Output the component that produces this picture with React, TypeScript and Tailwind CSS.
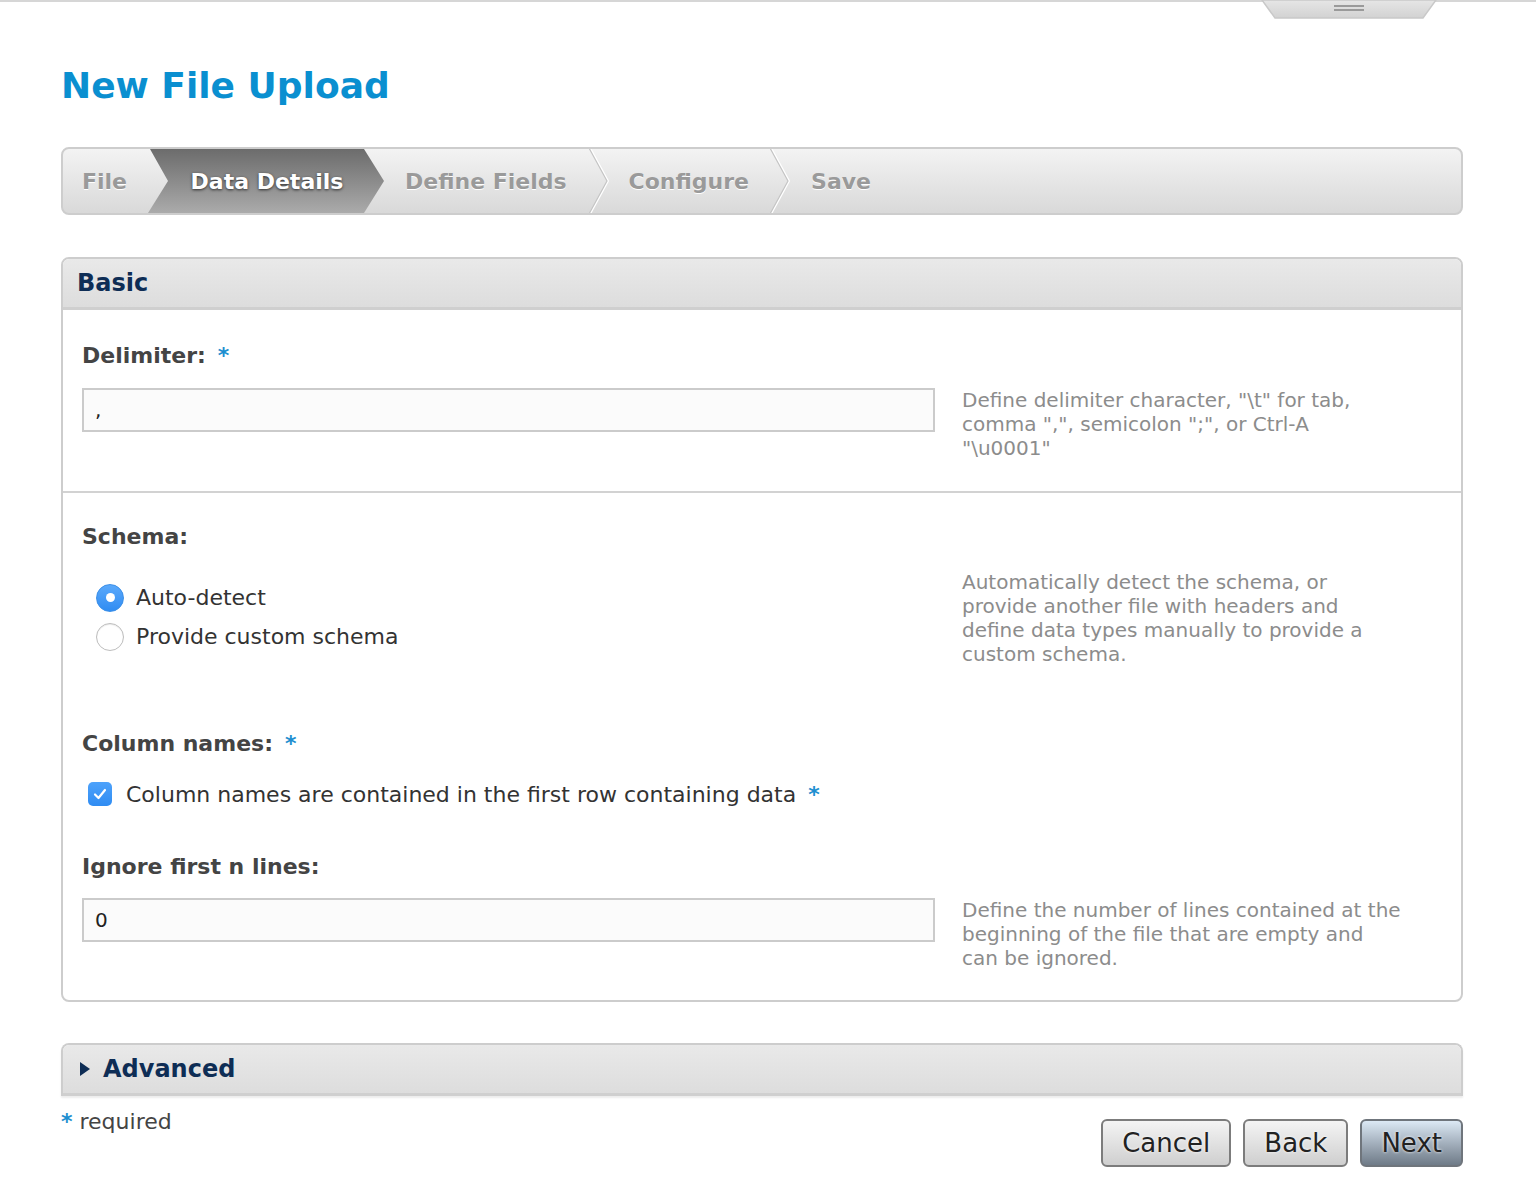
import React, { useState } from 'react';

const font = "font-['DejaVu_Sans',Verdana,sans-serif]";

function Star() {
  return <span className="text-[#1e8fd0] font-bold">*</span>;
}

function StepSeparator() {
  return (
    <svg width="22" height="66" viewBox="0 0 22 66" className="shrink-0">
      <polyline points="2,0 20,33 2,66" fill="none" stroke="#ffffff" strokeWidth="2" transform="translate(1,0)" />
      <polyline points="2,0 20,33 2,66" fill="none" stroke="#c4c4c4" strokeWidth="1.2" />
    </svg>
  );
}

function Wizard() {
  const dim = 'text-[22px] font-bold text-[#9a9a9a] [text-shadow:0_1px_0_#ffffff] whitespace-nowrap';
  return (
    <div className="h-[68px] border-2 border-[#cdcdcd] rounded-[8px] bg-linear-to-b from-[#f3f3f3] to-[#d9d9d9] flex items-stretch overflow-hidden">
      <div className={`${dim} flex items-center pl-[19px] w-[85px]`}>File</div>
      <div className="w-[236px] flex items-center justify-center bg-linear-to-b from-[#6c6c6c] to-[#ababab] [clip-path:polygon(2px_0,calc(100%_-_20px)_0,100%_50%,calc(100%_-_20px)_100%,0_100%,20px_50%)]">
        <span className="text-[22px] font-bold text-white [text-shadow:0_1px_3px_rgba(0,0,0,0.7)] whitespace-nowrap pl-[2px]">Data Details</span>
      </div>
      <div className={`${dim} flex items-center pl-[21px]`}>Define Fields</div>
      <div className="flex items-center pl-[20px]"><StepSeparator /></div>
      <div className={`${dim} flex items-center pl-[20px]`}>Configure</div>
      <div className="flex items-center pl-[19px]"><StepSeparator /></div>
      <div className={`${dim} flex items-center pl-[21px]`}>Save</div>
    </div>
  );
}

function PanelHeader({ children, arrow }: { children: React.ReactNode; arrow?: boolean }) {
  return (
    <div className="h-[51px] flex items-center px-[14px] bg-linear-to-b from-[#e9e9e9] to-[#dddddd] border-b-[3px] border-[#cfcfcf]">
      {arrow && (
        <svg width="12" height="16" viewBox="0 0 12 16" className="mr-[12px] ml-[2px]">
          <polygon points="1,1 11,8 1,15" fill="#0e2d55" />
        </svg>
      )}
      <span className="text-[24px] font-bold text-[#0e2d55]">{children}</span>
    </div>
  );
}

function Label({ children, star }: { children: React.ReactNode; star?: boolean }) {
  return (
    <div className="text-[22px] leading-[28px] font-bold text-[#444444]">
      {children}
      {star && <span className="ml-[12px]"><Star /></span>}
    </div>
  );
}

function Help({ children }: { children: React.ReactNode }) {
  return <div className="flex-1 text-[20px] leading-[24px] text-[#8c8c8c] whitespace-nowrap">{children}</div>;
}

function TextInput({ value }: { value: string }) {
  return (
    <input
      readOnly
      value={value}
      className="w-[853px] h-[44px] shrink-0 border-2 border-[#cbcbcb] bg-[#fbfbfb] px-[11px] text-[20px] text-[#222222] outline-none"
    />
  );
}

function Radio({ checked }: { checked: boolean }) {
  if (checked) {
    return (
      <span className="w-[28px] h-[28px] rounded-full bg-linear-to-b from-[#5aa9fb] to-[#2f8cf2] border border-[#3a8fe8] flex items-center justify-center">
        <span className="w-[9px] h-[9px] rounded-full bg-white" />
      </span>
    );
  }
  return <span className="w-[28px] h-[28px] rounded-full bg-white border border-[#bdbdbd] shadow-[inset_0_1px_1px_rgba(0,0,0,0.08)]" />;
}

export default function App() {
  const [schema, setSchema] = useState('auto');

  return (
    <div className={`${font} bg-white min-h-[1198px] border-t-2 border-[#d6d6d6] relative`}>
      <svg width="176" height="20" viewBox="0 0 176 20" className="absolute left-[1261px] top-[-2px]">
        <defs>
          <linearGradient id="hg" x1="0" y1="0" x2="0" y2="1">
            <stop offset="0" stopColor="#e6e6e6" />
            <stop offset="1" stopColor="#d2d2d2" />
          </linearGradient>
        </defs>
        <polygon points="1,0 175,0 162,18 14,18" fill="url(#hg)" stroke="#c9c9c9" strokeWidth="1.5" />
        <rect x="73" y="5" width="30" height="2" fill="#9a9a9a" />
        <rect x="73" y="9" width="30" height="2" fill="#9a9a9a" />
      </svg>

      <div className="ml-[61px] w-[1402px]">
        <h1 className="pt-[62px] text-[36px] leading-[44px] font-bold text-[#0a8fd0]">New File Upload</h1>

        <div className="mt-[39px]">
          <Wizard />
        </div>

        <div className="mt-[42px] border-2 border-[#cdcdcd] rounded-[8px] overflow-hidden">
          <PanelHeader>Basic</PanelHeader>

          <div className="pl-[19px] pt-[32px] pb-[31px] border-b-2 border-[#d2d2d2]">
            <Label star>Delimiter:</Label>
            <div className="mt-[18px] flex items-start gap-[27px]">
              <TextInput value="," />
              <Help>
                Define delimiter character, "\t" for tab,<br />
                comma ",", semicolon ";", or Ctrl-A<br />
                "\u0001"
              </Help>
            </div>
          </div>

          <div className="pl-[19px] pt-[30px] pb-[30px]">
            <Label>Schema:</Label>
            <div className="mt-[19px] flex items-start gap-[27px]">
              <div className="w-[853px] shrink-0 pt-[8px] pl-[14px]">
                {[
                  ['auto', 'Auto-detect'],
                  ['custom', 'Provide custom schema'],
                ].map(([k, t]) => (
                  <label key={k} className="h-[39px] flex items-center gap-[12px] cursor-pointer" onClick={() => setSchema(k)}>
                    <Radio checked={schema === k} />
                    <span className="text-[22px] text-[#333333]">{t}</span>
                  </label>
                ))}
              </div>
              <Help>
                Automatically detect the schema, or<br />
                provide another file with headers and<br />
                define data types manually to provide a<br />
                custom schema.
              </Help>
            </div>

            <div className="mt-[64px]">
              <Label star>Column names:</Label>
            </div>
            <div className="mt-[22px] h-[28px] flex items-center pl-[6px]">
              <span className="w-[24px] h-[24px] rounded-[5px] bg-linear-to-b from-[#4da2fb] to-[#2f8cf2] flex items-center justify-center">
                <svg width="16" height="16" viewBox="0 0 16 16">
                  <polyline points="3,8.5 6.5,12 13,4" fill="none" stroke="#ffffff" strokeWidth="2.2" strokeLinecap="round" strokeLinejoin="round" />
                </svg>
              </span>
              <span className="ml-[14px] text-[22px] text-[#333333]">Column names are contained in the first row containing data</span>
              <span className="ml-[12px] text-[22px]"><Star /></span>
            </div>

            <div className="mt-[45px]">
              <Label>Ignore first n lines:</Label>
            </div>
            <div className="mt-[17px] flex items-start gap-[27px]">
              <TextInput value="0" />
              <Help>
                Define the number of lines contained at the<br />
                beginning of the file that are empty and<br />
                can be ignored.
              </Help>
            </div>
          </div>
        </div>

        <div className="mt-[41px] border-2 border-b-0 border-[#cdcdcd] rounded-t-[8px] overflow-hidden shadow-[0_2px_2px_rgba(0,0,0,0.08)]">
          <PanelHeader arrow>Advanced</PanelHeader>
        </div>

        <div className="flex justify-between items-start">
          <div className="pt-[9px] text-[22px] text-[#444444]">
            <Star /> required
          </div>
          <div className="pt-[23px] flex gap-[12px]">
            {['Cancel', 'Back'].map((b) => (
              <button key={b} className="h-[48px] px-[19px] rounded-[6px] border-2 border-[#7c7c7c] bg-linear-to-b from-[#f4f4f4] to-[#cfcfcf] text-[26px] text-[#222222] [text-shadow:0_0_3px_#ffffff]">
                {b}
              </button>
            ))}
            <button className="h-[48px] px-[19px] rounded-[6px] border-2 border-[#6f757c] bg-linear-to-b from-[#dce9f5] to-[#6f7b88] text-[26px] text-[#222222] [text-shadow:0_0_3px_#ffffff]">
              Next
            </button>
          </div>
        </div>
      </div>
    </div>
  );
}
